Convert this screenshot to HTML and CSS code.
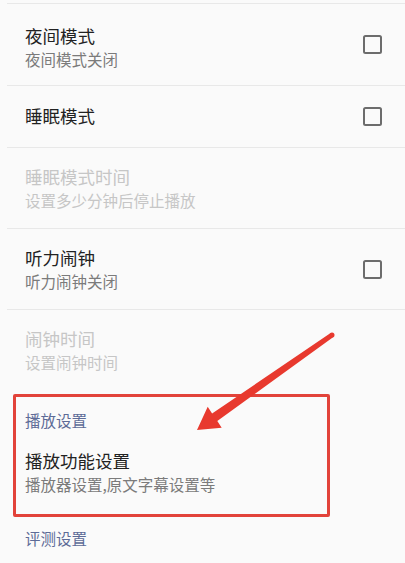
FILE: index.html
```html
<!DOCTYPE html>
<html lang="zh-CN">
<head>
<meta charset="utf-8">
<title>设置</title>
<link rel="stylesheet" href="styles.css">
</head>
<body>
<div class="screen">
  <div class="list">
    <div class="row first">
      <div class="text">
        <div class="title">夜间模式</div>
        <div class="summary">夜间模式关闭</div>
      </div>
      <span class="checkbox"></span>
    </div>
    <div class="row single">
      <div class="text">
        <div class="title">睡眠模式</div>
      </div>
      <span class="checkbox"></span>
    </div>
    <div class="row disabled">
      <div class="text">
        <div class="title">睡眠模式时间</div>
        <div class="summary">设置多少分钟后停止播放</div>
      </div>
    </div>
    <div class="row">
      <div class="text">
        <div class="title">听力闹钟</div>
        <div class="summary">听力闹钟关闭</div>
      </div>
      <span class="checkbox"></span>
    </div>
    <div class="row disabled">
      <div class="text">
        <div class="title">闹钟时间</div>
        <div class="summary">设置闹钟时间</div>
      </div>
    </div>
  </div>

  <div class="category">播放设置</div>
  <div class="row plain">
    <div class="text">
      <div class="title">播放功能设置</div>
      <div class="summary">播放器设置,原文字幕设置等</div>
    </div>
  </div>
  <div class="category second">评测设置</div>

  <div class="highlight"></div>
  <svg class="arrow" width="405" height="563" viewBox="0 0 405 563" aria-hidden="true">
    <polygon points="330.6,333.0 212.1,413.5 207.7,406.7 197,430 221.7,427.7 217.3,420.9 333.4,337.0" fill="#e8392e"/>
    <circle cx="332" cy="335" r="2.5" fill="#e8392e"/>
  </svg>
</div>
</body>
</html>
```

FILE: styles.css
```css
html, body {
  margin: 0;
  padding: 0;
  background: #fafafa;
}

body {
  font-family: "Noto Sans CJK SC", "Noto Sans", sans-serif;
}

.screen {
  position: relative;
  width: 405px;
  height: 563px;
  overflow: hidden;
  padding-top: 3px;
  box-sizing: border-box;
}

.row {
  display: flex;
  align-items: center;
  justify-content: space-between;
  margin-left: 7px;
  padding: 17px 23px 17px 18px;
  border-top: 1px solid #e8e8e8;
}

.row.first {
  padding-top: 20px;
  padding-bottom: 15px;
}

.row.single {
  padding-top: 18px;
  padding-bottom: 19px;
}

.row.plain {
  border-top: none;
  padding-top: 19px;
}

.title {
  font-size: 17.5px;
  line-height: 24px;
  color: #222222;
}

.summary {
  font-size: 15.5px;
  line-height: 22px;
  color: #7b7b7b;
}

.disabled .title,
.disabled .summary {
  color: #c6c6c6;
}

.checkbox {
  width: 15px;
  height: 15px;
  border: 2.5px solid #6c6c6c;
  border-radius: 2.5px;
  flex: none;
}

.first .checkbox {
  margin-top: -5px;
}

.category {
  margin-left: 7px;
  padding: 20px 18px 0;
  font-size: 15.5px;
  line-height: 20px;
  color: #5d6b97;
}

.category.second {
  padding-top: 16px;
}

.highlight {
  position: absolute;
  left: 13px;
  top: 394px;
  width: 317px;
  height: 123px;
  box-sizing: border-box;
  border: 3.5px solid #e2433a;
  border-radius: 2px;
}

.arrow {
  position: absolute;
  left: 0;
  top: 0;
}
```
